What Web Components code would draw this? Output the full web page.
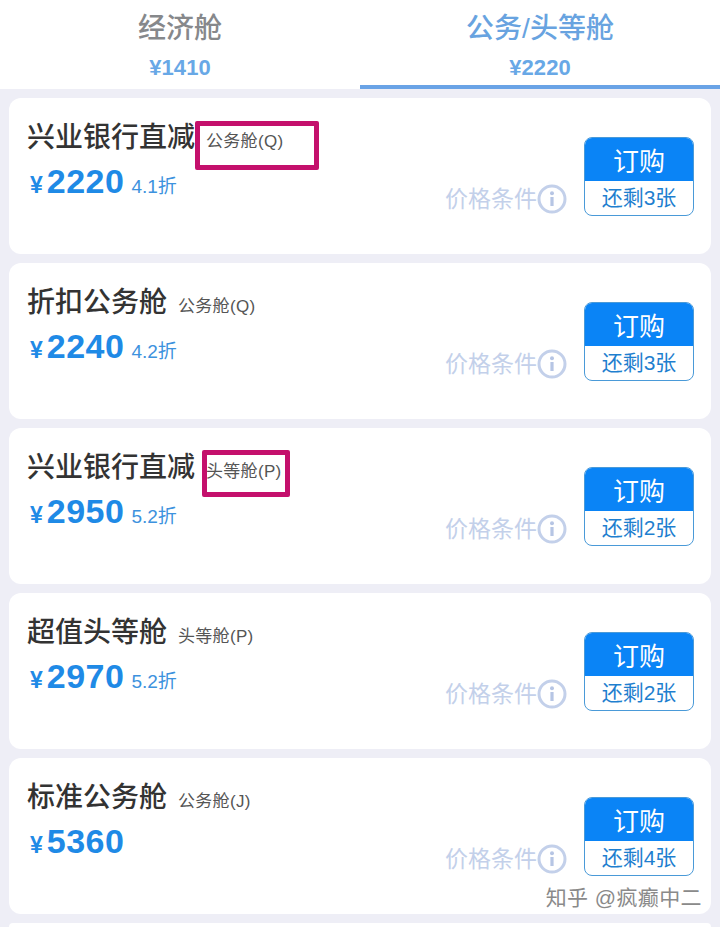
<!DOCTYPE html>
<html lang="zh">
<head>
<meta charset="utf-8">
<title>舱位</title>
<style>
  html, body { margin: 0; height: 927px; overflow: hidden; background: #eeeef6; }
  body {
    position: relative;
    font-family: "Liberation Sans", "Noto Sans CJK SC", sans-serif;
  }
  .list { display: flex; flex-direction: column; gap: 9px; padding: 9px 9px 0; }
</style>
</head>
<body>
<template id="cabin-tab-tpl">
  <style>
    :host { display: flex; flex-direction: column; align-items: center; flex: 1; height: 85px; border-bottom: 4px solid transparent; color: #86888b; }
    :host([active]) { border-bottom-color: #6aa3e6; color: #68a3e0; }
    .name { font-size: 28px; line-height: 34px; margin-top: 12px; font-weight: 500; }
    .price { font-size: 22px; line-height: 26px; margin-top: 9px; font-weight: 700; color: #68a8e6; letter-spacing: .1px; }
  </style>
  <div class="name"><slot></slot></div>
  <div class="price"></div>
</template>

<template id="cabin-tabs-tpl">
  <style>
    :host { display: flex; background: #fff; }
  </style>
  <slot></slot>
</template>

<template id="fare-card-tpl">
  <style>
    :host { display: flex; justify-content: space-between; box-sizing: border-box; height: 156px; padding: 24px 17px 0 18px; background: #fff; border-radius: 12px; }
    :host([stub]) { height: 4px; padding: 0; border-radius: 12px 12px 0 0; }
    .title { display: flex; align-items: baseline; height: 34px; }
    .name { font-size: 28px; line-height: 34px; color: #333; font-weight: 500; margin-top: -1px; }
    .cls { font-size: 17px; color: #555; margin-left: 11px; letter-spacing: .3px; }
    .price { display: flex; align-items: baseline; margin-top: 6px; color: #1f8ae6; }
    .yen { font-size: 23px; font-weight: 700; margin: 0 4px 0 3px; }
    .num { font-size: 34px; line-height: 38px; font-weight: 700; letter-spacing: .5px; }
    .off { font-size: 19px; margin-left: 7px; color: #3d92de; }
    .side { display: flex; align-items: flex-start; }
    .cond { display: flex; align-items: center; margin: 62px 17px 0 0; font-size: 23px; line-height: 30px; color: #c3d0ea; }
    .cond svg { width: 30px; height: 30px; display: block; }
    order-button { margin-top: 15px; }
  </style>
  <div class="left">
    <div class="title"><span class="name"></span><span class="cls"></span></div>
    <div class="price"><span class="yen">¥</span><span class="num"></span><span class="off"></span></div>
  </div>
  <div class="side">
    <div class="cond">价格条件<svg viewBox="0 0 30 30" fill="none"><circle cx="15" cy="15" r="13" stroke="#c3d0ea" stroke-width="3"/><circle cx="15" cy="9.2" r="2" fill="#b6c5e4"/><path d="M15 13v9" stroke="#b6c5e4" stroke-width="3.2"/></svg></div>
    <order-button></order-button>
  </div>
</template>

<template id="order-button-tpl">
  <style>
    :host { display: flex; flex-direction: column; box-sizing: border-box; width: 110px; height: 79px; border: 1px solid #4a9ad8; border-radius: 8px; overflow: hidden; background: #fff; }
    .buy { height: 44px; margin: -1px -1px 0; background: #0a84f6; color: #fff; font-size: 26px; line-height: 50px; text-align: center; }
    .left { flex: 1; color: #1f7fcf; font-size: 21px; line-height: 34px; text-align: center; }
  </style>
  <div class="buy">订购</div>
  <div class="left"></div>
</template>

<template id="mark-box-tpl">
  <style>
    :host { position: absolute; box-sizing: border-box; border: 5px solid #c4106c; border-radius: 2px; pointer-events: none; }
  </style>
</template>

<template id="water-mark-tpl">
  <style>
    :host { display: block; position: absolute; z-index: 5; font-size: 21px; line-height: 27px; color: #8a8a8a; text-shadow: 0 0 2px #fff; letter-spacing: .4px; white-space: nowrap; }
  </style>
  <slot></slot>
</template>

<cabin-tabs>
  <cabin-tab price="¥1410">经济舱</cabin-tab>
  <cabin-tab price="¥2220" active>公务/头等舱</cabin-tab>
</cabin-tabs>

<div class="list">
  <fare-card name="兴业银行直减" cls="公务舱(Q)" price="2220" off="4.1折" left-count="还剩3张"></fare-card>
  <fare-card name="折扣公务舱" cls="公务舱(Q)" price="2240" off="4.2折" left-count="还剩3张"></fare-card>
  <fare-card name="兴业银行直减" cls="头等舱(P)" price="2950" off="5.2折" left-count="还剩2张"></fare-card>
  <fare-card name="超值头等舱" cls="头等舱(P)" price="2970" off="5.2折" left-count="还剩2张"></fare-card>
  <fare-card name="标准公务舱" cls="公务舱(J)" price="5360" left-count="还剩4张"></fare-card>
  <fare-card stub></fare-card>
</div>

<mark-box style="left:195px;top:121px;width:124px;height:49px"></mark-box>
<mark-box style="left:202px;top:450px;width:88px;height:47px"></mark-box>
<water-mark style="right:18px;top:884px">知乎 @疯癫中二</water-mark>

<script>
function fromTemplate(el, id) {
  const root = el.attachShadow({ mode: "open" });
  root.appendChild(document.getElementById(id).content.cloneNode(true));
  return root;
}

class CabinTabs extends HTMLElement {
  constructor() { super(); fromTemplate(this, "cabin-tabs-tpl"); }
}

class CabinTab extends HTMLElement {
  constructor() { super(); fromTemplate(this, "cabin-tab-tpl"); }
  connectedCallback() {
    this.shadowRoot.querySelector(".price").textContent = this.getAttribute("price");
  }
}

class OrderButton extends HTMLElement {
  constructor() { super(); fromTemplate(this, "order-button-tpl"); }
  set count(text) { this.shadowRoot.querySelector(".left").textContent = text; }
}
customElements.define("order-button", OrderButton);

class FareCard extends HTMLElement {
  constructor() { super(); fromTemplate(this, "fare-card-tpl"); }
  connectedCallback() {
    const root = this.shadowRoot;
    // the last card is only cut off at the bottom of the screen
    if (this.hasAttribute("stub")) { root.querySelector(".left").remove(); root.querySelector(".side").remove(); return; }
    root.querySelector(".name").textContent = this.getAttribute("name");
    root.querySelector(".cls").textContent = this.getAttribute("cls");
    root.querySelector(".num").textContent = this.getAttribute("price");
    root.querySelector(".off").textContent = this.getAttribute("off") || "";
    root.querySelector("order-button").count = this.getAttribute("left-count");
  }
}

class MarkBox extends HTMLElement {
  constructor() { super(); fromTemplate(this, "mark-box-tpl"); }
}

class WaterMark extends HTMLElement {
  constructor() { super(); fromTemplate(this, "water-mark-tpl"); }
}

customElements.define("cabin-tabs", CabinTabs);
customElements.define("cabin-tab", CabinTab);
customElements.define("fare-card", FareCard);
customElements.define("mark-box", MarkBox);
customElements.define("water-mark", WaterMark);
</script>
</body>
</html>
